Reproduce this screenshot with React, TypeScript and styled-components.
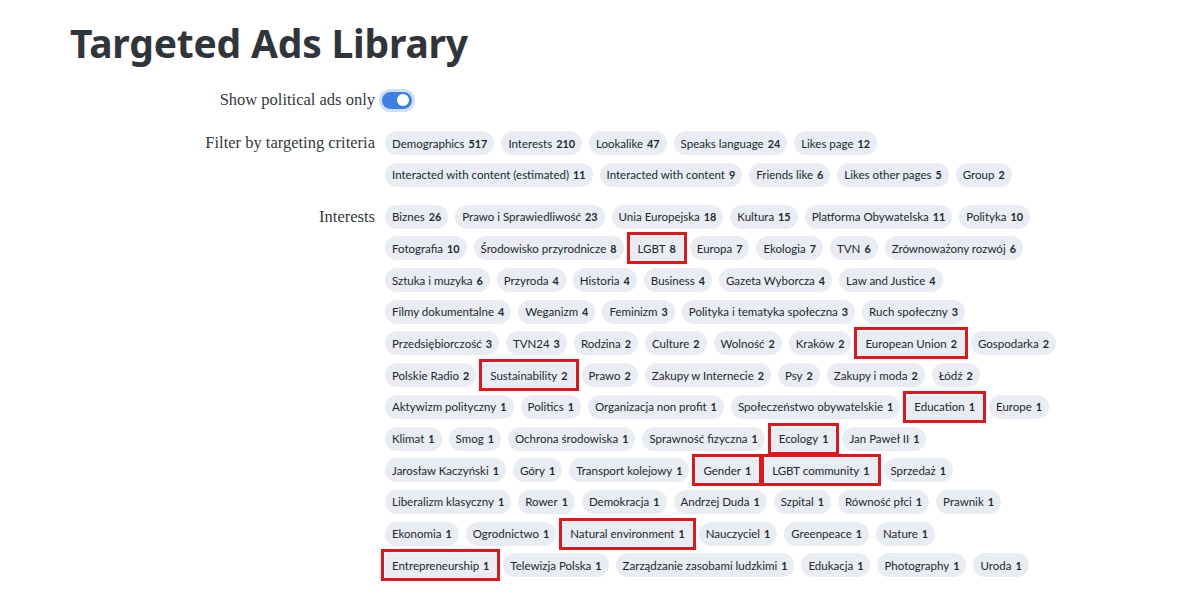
import React from 'react'
import styled, { createGlobalStyle, css } from 'styled-components'

const GlobalStyle = createGlobalStyle`
  html, body {
    margin: 0;
    padding: 0;
    background: #ffffff;
  }
  body {
    font-family: Lato, "Noto Sans", sans-serif;
    color: #212529;
    overflow: hidden;
  }
`

type Tag = { name: string; count: number; marked?: boolean }

const filterRows: Tag[][] = [
    [
        { name: 'Demographics', count: 517 },
        { name: 'Interests', count: 210 },
        { name: 'Lookalike', count: 47 },
        { name: 'Speaks language', count: 24 },
        { name: 'Likes page', count: 12 },
    ],
    [
        { name: 'Interacted with content (estimated)', count: 11 },
        { name: 'Interacted with content', count: 9 },
        { name: 'Friends like', count: 6 },
        { name: 'Likes other pages', count: 5 },
        { name: 'Group', count: 2 },
    ],
]

const interestRows: Tag[][] = [
    [
        { name: 'Biznes', count: 26 },
        { name: 'Prawo i Sprawiedliwość', count: 23 },
        { name: 'Unia Europejska', count: 18 },
        { name: 'Kultura', count: 15 },
        { name: 'Platforma Obywatelska', count: 11 },
        { name: 'Polityka', count: 10 },
    ],
    [
        { name: 'Fotografia', count: 10 },
        { name: 'Środowisko przyrodnicze', count: 8 },
        { name: 'LGBT', count: 8, marked: true },
        { name: 'Europa', count: 7 },
        { name: 'Ekologia', count: 7 },
        { name: 'TVN', count: 6 },
        { name: 'Zrównoważony rozwój', count: 6 },
    ],
    [
        { name: 'Sztuka i muzyka', count: 6 },
        { name: 'Przyroda', count: 4 },
        { name: 'Historia', count: 4 },
        { name: 'Business', count: 4 },
        { name: 'Gazeta Wyborcza', count: 4 },
        { name: 'Law and Justice', count: 4 },
    ],
    [
        { name: 'Filmy dokumentalne', count: 4 },
        { name: 'Weganizm', count: 4 },
        { name: 'Feminizm', count: 3 },
        { name: 'Polityka i tematyka społeczna', count: 3 },
        { name: 'Ruch społeczny', count: 3 },
    ],
    [
        { name: 'Przedsiębiorczość', count: 3 },
        { name: 'TVN24', count: 3 },
        { name: 'Rodzina', count: 2 },
        { name: 'Culture', count: 2 },
        { name: 'Wolność', count: 2 },
        { name: 'Kraków', count: 2 },
        { name: 'European Union', count: 2, marked: true },
        { name: 'Gospodarka', count: 2 },
    ],
    [
        { name: 'Polskie Radio', count: 2 },
        { name: 'Sustainability', count: 2, marked: true },
        { name: 'Prawo', count: 2 },
        { name: 'Zakupy w Internecie', count: 2 },
        { name: 'Psy', count: 2 },
        { name: 'Zakupy i moda', count: 2 },
        { name: 'Łódź', count: 2 },
    ],
    [
        { name: 'Aktywizm polityczny', count: 1 },
        { name: 'Politics', count: 1 },
        { name: 'Organizacja non profit', count: 1 },
        { name: 'Społeczeństwo obywatelskie', count: 1 },
        { name: 'Education', count: 1, marked: true },
        { name: 'Europe', count: 1 },
    ],
    [
        { name: 'Klimat', count: 1 },
        { name: 'Smog', count: 1 },
        { name: 'Ochrona środowiska', count: 1 },
        { name: 'Sprawność fizyczna', count: 1 },
        { name: 'Ecology', count: 1, marked: true },
        { name: 'Jan Paweł II', count: 1 },
    ],
    [
        { name: 'Jarosław Kaczyński', count: 1 },
        { name: 'Góry', count: 1 },
        { name: 'Transport kolejowy', count: 1 },
        { name: 'Gender', count: 1, marked: true },
        { name: 'LGBT community', count: 1, marked: true },
        { name: 'Sprzedaż', count: 1 },
    ],
    [
        { name: 'Liberalizm klasyczny', count: 1 },
        { name: 'Rower', count: 1 },
        { name: 'Demokracja', count: 1 },
        { name: 'Andrzej Duda', count: 1 },
        { name: 'Szpital', count: 1 },
        { name: 'Równość płci', count: 1 },
        { name: 'Prawnik', count: 1 },
    ],
    [
        { name: 'Ekonomia', count: 1 },
        { name: 'Ogrodnictwo', count: 1 },
        { name: 'Natural environment', count: 1, marked: true },
        { name: 'Nauczyciel', count: 1 },
        { name: 'Greenpeace', count: 1 },
        { name: 'Nature', count: 1 },
    ],
    [
        { name: 'Entrepreneurship', count: 1, marked: true },
        { name: 'Telewizja Polska', count: 1 },
        { name: 'Zarządzanie zasobami ludzkimi', count: 1 },
        { name: 'Edukacja', count: 1 },
        { name: 'Photography', count: 1 },
        { name: 'Uroda', count: 1 },
    ],
]

const Page = styled.main`
    padding: 14px 0 0 70px;
`

const Title = styled.h1`
    margin: 0 0 16px;
    font-family: "Noto Sans", "Open Sans", sans-serif;
    font-size: 39px;
    font-weight: 700;
    line-height: 58px;
    letter-spacing: -0.2px;
    color: #30353b;
`

const Section = styled.section<{ $gap?: number }>`
    display: grid;
    grid-template-columns: 305px 680px;
    column-gap: 10px;
    margin-bottom: ${(p) => p.$gap ?? 10}px;
`

const Label = styled.div`
    text-align: right;
    font-family: "Liberation Serif", "Times New Roman", serif;
    font-size: 16.5px;
    line-height: 24px;
    color: #343a40;
    white-space: nowrap;
`

const Lines = styled.div`
    display: flex;
    flex-direction: column;
    gap: 7.7px;
`

const Line = styled.div`
    display: flex;
    gap: 7px;
    white-space: nowrap;
`

const marked = css`
    border-radius: 0;
    outline: 3px solid #e3141c;
    outline-offset: 1px;
`

const Pill = styled.span<{ $marked?: boolean }>`
    display: inline-flex;
    align-items: center;
    height: 24px;
    padding: 0 7px;
    border-radius: 12px;
    background: #e9ecf3;
    font-family: Lato, "Noto Sans", sans-serif;
    font-size: 11.5px;
    color: #24282d;
    ${(p) => p.$marked && marked}
`

const Count = styled.b`
    margin-left: 4px;
    font-size: 10.8px;
    font-weight: 700;
`

const SwitchRow = styled.div`
    display: flex;
    align-items: center;
    height: 24px;
`

const Switch = styled.span<{ $on: boolean }>`
    position: relative;
    display: inline-block;
    width: 30px;
    height: 17px;
    margin-left: -3px;
    border-radius: 9px;
    background: ${(p) => (p.$on ? '#3f7fe4' : '#ced4da')};
    box-shadow: 0 0 0 3px rgba(63, 127, 228, 0.25);

    &::after {
        content: '';
        position: absolute;
        top: 2.5px;
        left: ${(p) => (p.$on ? '15px' : '3px')};
        width: 12px;
        height: 12px;
        border-radius: 50%;
        background: #ffffff;
    }
`

const TagLines = ({ rows }: { rows: Tag[][] }) => (
    <Lines>
        {rows.map((row, i) => (
            <Line key={i}>
                {row.map((tag) => (
                    <Pill key={tag.name} $marked={tag.marked}>
                        {tag.name}
                        <Count>{tag.count}</Count>
                    </Pill>
                ))}
            </Line>
        ))}
    </Lines>
)

export default function App() {
    return (
        <>
            <GlobalStyle />
            <Page>
                <Title>Targeted Ads Library</Title>
                <Section $gap={19}>
                    <Label>Show political ads only</Label>
                    <SwitchRow>
                        <Switch $on />
                    </SwitchRow>
                </Section>
                <Section $gap={18}>
                    <Label>Filter by targeting criteria</Label>
                    <TagLines rows={filterRows} />
                </Section>
                <Section>
                    <Label>Interests</Label>
                    <TagLines rows={interestRows} />
                </Section>
            </Page>
        </>
    )
}
